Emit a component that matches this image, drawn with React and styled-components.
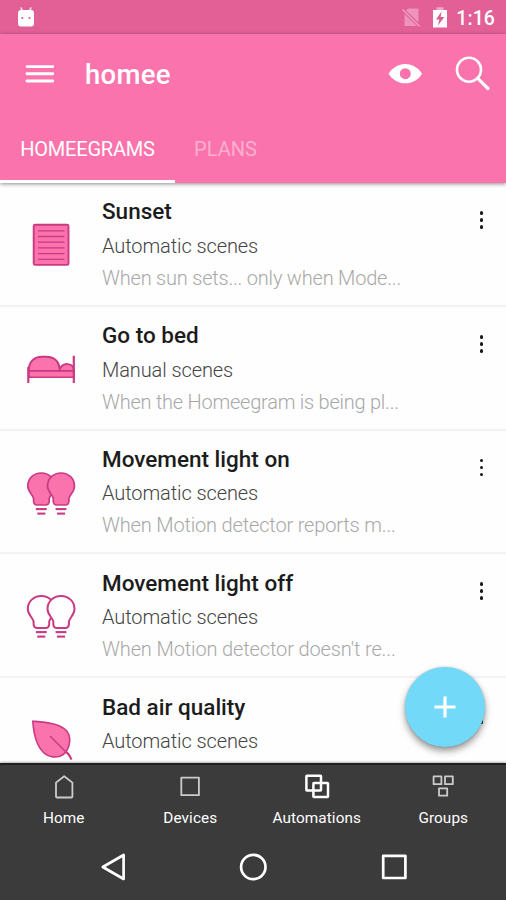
import React from "react";
import styled, { createGlobalStyle } from "styled-components";

const PINK = "#fb73ac";
const MAGENTA = "#c93a82";

const GlobalStyle = createGlobalStyle`
  *, *::before, *::after { box-sizing: border-box; }
  body { margin: 0; background: #fff; font-family: Roboto, "Liberation Sans", sans-serif; }
  svg { display: block; }
  button { border: 0; padding: 0; margin: 0; background: none; font: inherit; color: inherit; }
`;

const Screen = styled.div`
  position: relative;
  display: flex;
  flex-direction: column;
  width: 506px;
  height: 900px;
  overflow: hidden;
  background: #fefefe;
`;

const StatusBar = styled.div`
  display: flex;
  align-items: center;
  flex: 0 0 34px;
  padding: 0 11px 0 16px;
  background: #e36096;
  color: #fff;
`;

const StatusIcons = styled.div`
  display: flex;
  align-items: center;
  margin-left: auto;
  gap: 10px;
`;

const Clock = styled.span`
  margin-left: -2px;
  font-size: 19.5px;
  line-height: 37px;
  height: 34px;
  font-weight: 500;
  letter-spacing: 0.1px;
`;

const Header = styled.header`
  position: relative;
  z-index: 1;
  flex: 0 0 149px;
  background: ${PINK};
  color: #fff;
  box-shadow: 0 1px 4px rgba(0, 0, 0, 0.45);
`;

const Toolbar = styled.div`
  display: flex;
  align-items: center;
  height: 80px;
  padding: 0 15px 0 24px;
`;

const AppTitle = styled.h1`
  margin: 2px 0 0 29px;
  flex: 1;
  font-size: 27.5px;
  line-height: 34px;
  font-weight: 500;
  letter-spacing: 0.3px;
`;

const ToolbarActions = styled.div`
  display: flex;
  align-items: center;
  gap: 33px;
`;

const Tabs = styled.nav`
  display: flex;
  height: 69px;
`;

const Tab = styled.button`
  height: 69px;
  width: ${(p) => (p.$active ? "175px" : "101px")};
  padding-top: 4px;
  font-size: 20px;
  letter-spacing: ${(p) => (p.$active ? "-0.2px" : "0px")};
  color: ${(p) => (p.$active ? "#fff" : "#fdb0d0")};
  border-bottom: 3px solid ${(p) => (p.$active ? "#fff" : "transparent")};
`;

const List = styled.main`
  flex: 1 1 0;
  min-height: 0;
  overflow: hidden;
`;

const Row = styled.article`
  display: grid;
  grid-template-columns: 102px 1fr 50px;
  height: 123.8px;
  border-bottom: 2px solid #f3f3f3;
`;

const RowText = styled.div`
  padding-top: 12.4px;
  white-space: nowrap;
`;

const RowTitle = styled.h2`
  margin: 0;
  font-size: 22.5px;
  line-height: 32px;
  font-weight: 500;
  color: #1c1c1c;
`;

const RowKind = styled.p`
  margin: 2.4px 0 0;
  font-size: 20px;
  line-height: 32px;
  font-weight: 300;
  color: #444;
  letter-spacing: -0.1px;
`;

const RowDetail = styled.p`
  margin: 0;
  font-size: 20px;
  line-height: 33px;
  font-weight: 300;
  color: #a8a8a8;
  letter-spacing: ${(p) => p.$track || 0}px;
`;

const MoreButton = styled.button`
  display: flex;
  flex-direction: column;
  align-items: center;
  align-self: start;
  gap: 3.2px;
  margin: 28px 0 0 1px;
`;

const Dot = styled.span`
  width: 3.8px;
  height: 3.8px;
  border-radius: 50%;
  background: #171717;
`;

const AddButton = styled.button`
  position: absolute;
  z-index: 2;
  left: 405px;
  top: 666.5px;
  width: 80px;
  height: 80px;
  display: grid;
  place-items: center;
  border-radius: 50%;
  background: #72daf8;
  box-shadow: 0 4px 7px rgba(0, 0, 0, 0.42), 0 0 2px rgba(0, 0, 0, 0.2);
`;

const BottomNav = styled.nav`
  flex: 0 0 74px;
  display: grid;
  grid-template-columns: repeat(4, 1fr);
  background: #3b3b3b;
  border-top: 2px solid #202020;
  box-shadow: 0 -1px 2px rgba(0, 0, 0, 0.3);
  position: relative;
`;

const NavItem = styled.button`
  display: flex;
  flex-direction: column;
  align-items: center;
  padding: 8px 0 0 1px;
  color: #fff;
`;

const NavLabel = styled.span`
  margin-top: 6px;
  font-size: 15.3px;
  line-height: 18px;
  letter-spacing: 0.1px;
`;

const SystemBar = styled.div`
  flex: 0 0 63px;
  display: grid;
  grid-template-columns: repeat(3, 141px);
  justify-content: center;
  justify-items: center;
  padding-top: 13px;
  background: #3b3b3b;
`;

const AndroidIcon = () => (
  <svg width="20" height="22" viewBox="16 5 20 22">
    <path d="M21 6.5L22.3 10 M31 6.5L29.7 10" stroke="#fff" strokeWidth="1.6" opacity=".85" />
    <rect x="18" y="9" width="16" height="16.5" rx="3" fill="#fff" />
    <circle cx="22.3" cy="17" r="1.1" fill="#d95f93" />
    <circle cx="29.5" cy="17" r="1.1" fill="#d95f93" />
  </svg>
);

const NoSimIcon = () => (
  <svg width="20" height="22" viewBox="402 6 20 22">
    <path d="M408 8.5H418.5V22.5L406 10.5Z M404.5 14L417 26H404.5Z" fill="#f2a4c6" opacity=".75" />
    <path d="M402.5 9.5L419.5 26.2" stroke="#f0a1c3" strokeWidth="1.4" />
  </svg>
);

const BatteryIcon = () => (
  <svg width="16" height="22" viewBox="432 6.5 16 22">
    <path d="M433 10.5H447V28H433Z" fill="#fff" />
    <path d="M436.5 7.8H443.5V10.5H436.5Z" fill="#f2a4c6" />
    <path d="M441.5 12L436 20H439.3L438 26L444.3 17.5H440.7Z" fill="#dc5b91" />
  </svg>
);

const MenuIcon = () => (
  <svg width="32" height="20" viewBox="24 64 32 20">
    <path d="M27 66.6H52.8M27 73.8H52.8M27 81H52.8" stroke="#fff" strokeWidth="2.9" strokeLinecap="round" />
  </svg>
);

const EyeIcon = () => (
  <svg width="34" height="22" viewBox="388 63 34 22">
    <path
      d="M388.5 73.7C392 68 398.5 64 405.3 64S419 68 422 73.7C419 79.4 412 83.3 405.3 83.3S392 79.4 388.5 73.7Z M405.3 68.2A5.5 5.5 0 1 0 405.3 79.2A5.5 5.5 0 1 0 405.3 68.2Z"
      fill="#fff"
      fillRule="evenodd"
    />
  </svg>
);

const SearchIcon = () => (
  <svg width="36" height="36" viewBox="455 56 36 36">
    <circle cx="469" cy="69.7" r="12" fill="none" stroke="#fff" strokeWidth="2.6" />
    <path d="M477.5 78.2L488 88.5" stroke="#fff" strokeWidth="3.2" strokeLinecap="round" />
  </svg>
);

const RowIcon = ({ children }) => (
  <svg width="102" height="121" viewBox="0 0 102 121" fill={PINK} stroke={MAGENTA} strokeWidth="1.9">
    {children}
  </svg>
);

const ShutterIcon = () => (
  <RowIcon>
    <rect x="33.7" y="41.7" width="34.8" height="40.2" rx="1.5" />
    <path d="M38 47.8H64.5M38 53.5H64.5M38 59.2H64.5M38 64.9H64.5M38 70.6H64.5M38 76.3H64.5" strokeWidth="1.3" />
  </RowIcon>
);

const BedIcon = () => (
  <RowIcon>
    <path d="M59 64C60 58.8 64.5 56.5 68 57.1C71.5 57.5 73.5 59.5 74 63V64Z" />
    <path d="M28.8 64C28.5 55 34 49.8 42 49.8H46C54 49.8 58.8 54.5 59.2 60C59.8 62 60 64 60 64Z" />
    <path d="M28.8 64H74V70.2H28.8Z" strokeWidth="1.6" />
    <path d="M28.3 60V76M73.8 48.8V76" strokeWidth="2.2" />
  </RowIcon>
);

const BULB =
  "M36.4 81.5H27.8C25.8 81.5 24.5 80 24.3 78V75C23.5 71 18.5 68.5 18.5 62.5C18.5 54.8 24.5 49.5 32 49.5S45.5 54.8 45.5 62.5C45.5 68.5 40.7 71 39.9 75V78C39.7 80 38.4 81.5 36.4 81.5Z";

const BulbsIcon = ({ lit }) => (
  <RowIcon>
    {[9.3, 29].map((x) => (
      <g key={x} transform={`translate(${x} -7.5)`}>
        <path d={BULB} fill={lit ? PINK : "#fff"} strokeWidth={lit ? 1.7 : 2} />
        <path d="M26.6 85.6H37.4" strokeWidth="2.1" />
        <path d="M28 90.1H36" strokeWidth="2.1" />
      </g>
    ))}
  </RowIcon>
);

const LeafIcon = () => (
  <RowIcon>
    <path d="M32.8 43.2C44 44.2 59.5 45 66.8 53C70.5 57.2 70.2 64 68.8 68C67.5 72.3 65.7 75 62.5 77C57.5 80.2 48.5 79.6 43.5 74.5C36.5 67.5 33.5 54 32.8 43.2Z" strokeWidth="1.6" />
    <path d="M50 58L67 75" fill="none" strokeWidth="1.4" />
    <path d="M66 74C68.5 75.5 70 78 71.5 81.7" fill="none" strokeWidth="2.1" />
  </RowIcon>
);

const NavSvg = ({ bright, children }) => (
  <svg width="30" height="30" viewBox="0 0 30 30" fill="none" stroke={bright ? "#fff" : "#ccc"} strokeWidth={bright ? 2.5 : 1.8} strokeLinejoin="round">
    {children}
  </svg>
);

const HomeIcon = () => (
  <NavSvg>
    <path d="M7 9.6L15.2 3.2L23.4 9.6V23.4Q23.4 24.5 22.3 24.5H8.1Q7 24.5 7 23.4Z" />
  </NavSvg>
);

const DevicesIcon = () => (
  <NavSvg>
    <rect x="6.3" y="4.6" width="17.6" height="17.6" />
  </NavSvg>
);

const AutomationsIcon = () => (
  <NavSvg bright>
    <rect x="4.4" y="2.8" width="14.6" height="14.6" rx=".5" />
    <rect x="11.4" y="9.9" width="14.6" height="14" rx=".5" />
  </NavSvg>
);

const GroupsIcon = () => (
  <NavSvg>
    <rect x="5.6" y="3.4" width="7.8" height="7.8" />
    <rect x="17" y="3.4" width="7.8" height="7.8" />
    <rect x="11" y="15.3" width="8.2" height="7.4" />
  </NavSvg>
);

const SysSvg = ({ children }) => (
  <svg width="32" height="34" viewBox="0 0 32 34" fill="none" stroke="#fff" strokeWidth="2.7" strokeLinejoin="round">
    {children}
  </svg>
);

const ROWS = [
  { title: "Sunset", kind: "Automatic scenes", detail: "When sun sets... only when Mode...", track: -0.21, icon: <ShutterIcon /> },
  { title: "Go to bed", kind: "Manual scenes", detail: "When the Homeegram is being pl...", track: -0.24, icon: <BedIcon /> },
  { title: "Movement light on", kind: "Automatic scenes", detail: "When Motion detector reports m...", track: -0.17, icon: <BulbsIcon lit /> },
  { title: "Movement light off", kind: "Automatic scenes", detail: "When Motion detector doesn't re...", track: -0.13, icon: <BulbsIcon /> },
  { title: "Bad air quality", kind: "Automatic scenes", detail: "", icon: <LeafIcon /> },
];

const NAV = [
  { label: "Home", icon: <HomeIcon /> },
  { label: "Devices", icon: <DevicesIcon /> },
  { label: "Automations", icon: <AutomationsIcon /> },
  { label: "Groups", icon: <GroupsIcon /> },
];

export default function App() {
  return (
    <Screen>
      <GlobalStyle />
      <StatusBar>
        <AndroidIcon />
        <StatusIcons>
          <NoSimIcon />
          <BatteryIcon />
          <Clock>1:16</Clock>
        </StatusIcons>
      </StatusBar>
      <Header>
        <Toolbar>
          <MenuIcon />
          <AppTitle>homee</AppTitle>
          <ToolbarActions>
            <EyeIcon />
            <SearchIcon />
          </ToolbarActions>
        </Toolbar>
        <Tabs>
          <Tab $active>HOMEEGRAMS</Tab>
          <Tab>PLANS</Tab>
        </Tabs>
      </Header>
      <List>
        {ROWS.map((row) => (
          <Row key={row.title}>
            {row.icon}
            <RowText>
              <RowTitle>{row.title}</RowTitle>
              <RowKind>{row.kind}</RowKind>
              <RowDetail $track={row.track}>{row.detail}</RowDetail>
            </RowText>
            <MoreButton aria-label="More">
              <Dot />
              <Dot />
              <Dot />
            </MoreButton>
          </Row>
        ))}
      </List>
      <BottomNav>
        {NAV.map((item) => (
          <NavItem key={item.label}>
            {item.icon}
            <NavLabel>{item.label}</NavLabel>
          </NavItem>
        ))}
      </BottomNav>
      <SystemBar>
        <SysSvg>
          <path d="M6.8 17L27.6 5V29Z" />
        </SysSvg>
        <SysSvg>
          <circle cx="16.3" cy="17" r="12.2" />
        </SysSvg>
        <SysSvg>
          <rect x="5.2" y="5.8" width="22.2" height="22.2" />
        </SysSvg>
      </SystemBar>
      <AddButton aria-label="Add">
        <svg width="24" height="24" viewBox="0 0 24 24" stroke="#fff" strokeWidth="3.2">
          <path d="M1.5 12H22.5M12 1.5V22.5" />
        </svg>
      </AddButton>
    </Screen>
  );
}
